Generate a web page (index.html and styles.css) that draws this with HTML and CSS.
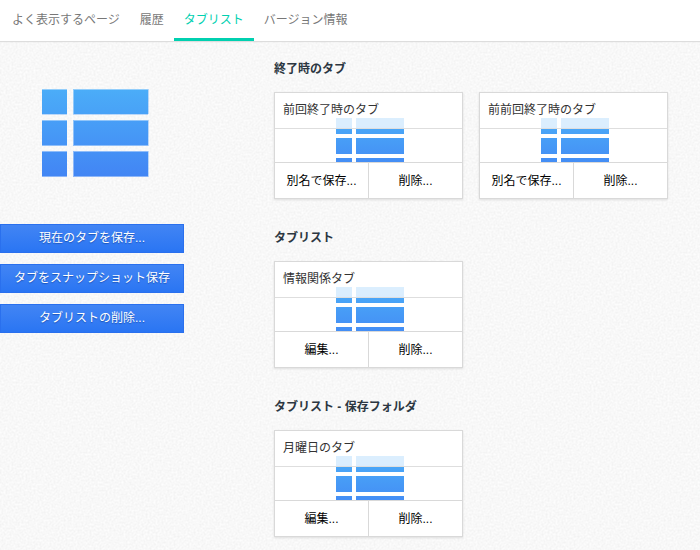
FILE: index.html
```html
<!DOCTYPE html>
<html lang="ja">
<head>
<meta charset="utf-8">
<meta name="viewport" content="width=device-width, initial-scale=1">
<title>タブリスト</title>
<link rel="stylesheet" href="styles.css">
</head>
<body>
<svg class="defs" width="0" height="0" aria-hidden="true">
  <defs>
    <linearGradient id="blue" gradientUnits="userSpaceOnUse" x1="0" y1="0" x2="0" y2="88">
      <stop offset="0" stop-color="#4badf8"/>
      <stop offset="1" stop-color="#4285f4"/>
    </linearGradient>
    <linearGradient id="blue-small" gradientUnits="userSpaceOnUse" x1="0" y1="0" x2="0" y2="56">
      <stop offset="0" stop-color="#4badf8"/>
      <stop offset="1" stop-color="#4285f4"/>
    </linearGradient>
    <symbol id="list" viewBox="0 0 71 44">
      <path fill="url(#blue-small)" d="M3 0h16v16H3zM23 0h48v16H23zM3 20h16v16H3zM23 20h48v16H23zM3 40h16v4H3zM23 40h48v4H23z"/>
    </symbol>
  </defs>
</svg>
<nav class="tabs">
  <a class="tab" href="#pages">よく表示するページ</a>
  <a class="tab" href="#history">履歴</a>
  <a class="tab tab-active" href="#tablist" aria-current="page">タブリスト</a>
  <a class="tab" href="#about">バージョン情報</a>
</nav>
<div class="layout">
  <aside class="side">
    <svg class="logo" width="107" height="88" viewBox="0 0 107 88" aria-hidden="true">
      <path fill="url(#blue)" d="M0 0h25v25H0zM31 0h75v25H31zM0 31h25v26H0zM31 31h75v26H31zM0 62h25v26H0zM31 62h75v26H31z"/>
      <path fill="#fff" fill-opacity=".4" d="M0 0h25v1H0zM31 0h75v1H31zM0 31h25v1H0zM31 31h75v1H31zM0 62h25v1H0zM31 62h75v1H31zM0 56h25v1H0zM31 56h75v1H31zM0 87h25v1H0zM31 87h75v1H31zM31 1h1v24h-1zM31 32h1v24h-1zM31 63h1v24h-1z"/>
      <path fill="#4a9bf6" fill-opacity=".35" d="M0 25h25v1H0zM31 25h75v1H31zM106 0h1v25h-1zM106 31h1v26h-1zM106 62h1v26h-1z"/>
    </svg>
    <button class="action" type="button">現在のタブを保存...</button>
    <button class="action" type="button">タブをスナップショット保存</button>
    <button class="action" type="button">タブリストの削除...</button>
  </aside>
  <main class="content">
    <section class="group">
      <h2 class="heading">終了時のタブ</h2>
      <div class="cards">
        <article class="card">
          <div class="preview">
            <svg class="thumb" width="71" height="44" aria-hidden="true"><use href="#list"/></svg>
            <h3 class="name">前回終了時のタブ</h3>
          </div>
          <div class="buttons">
            <button class="cell" type="button">別名で保存...</button>
            <button class="cell" type="button">削除...</button>
          </div>
        </article>
        <article class="card">
          <div class="preview">
            <svg class="thumb" width="71" height="44" aria-hidden="true"><use href="#list"/></svg>
            <h3 class="name">前前回終了時のタブ</h3>
          </div>
          <div class="buttons">
            <button class="cell" type="button">別名で保存...</button>
            <button class="cell" type="button">削除...</button>
          </div>
        </article>
      </div>
    </section>
    <section class="group">
      <h2 class="heading">タブリスト</h2>
      <div class="cards">
        <article class="card">
          <div class="preview">
            <svg class="thumb" width="71" height="44" aria-hidden="true"><use href="#list"/></svg>
            <h3 class="name">情報関係タブ</h3>
          </div>
          <div class="buttons">
            <button class="cell" type="button">編集...</button>
            <button class="cell" type="button">削除...</button>
          </div>
        </article>
      </div>
    </section>
    <section class="group">
      <h2 class="heading">タブリスト - 保存フォルダ</h2>
      <div class="cards">
        <article class="card">
          <div class="preview">
            <svg class="thumb" width="71" height="44" aria-hidden="true"><use href="#list"/></svg>
            <h3 class="name">月曜日のタブ</h3>
          </div>
          <div class="buttons">
            <button class="cell" type="button">編集...</button>
            <button class="cell" type="button">削除...</button>
          </div>
        </article>
      </div>
    </section>
  </main>
</div>
</body>
</html>
```
FILE: styles.css
```css
* {
  box-sizing: border-box;
}

body {
  margin: 0;
  background: #f7f7f7 url("data:image/svg+xml,%3Csvg xmlns='http://www.w3.org/2000/svg' width='200' height='200'%3E%3Cfilter id='n' x='0' y='0' width='100%25' height='100%25' color-interpolation-filters='sRGB'%3E%3CfeTurbulence type='fractalNoise' baseFrequency='.5' numOctaves='2' stitchTiles='stitch'/%3E%3CfeColorMatrix values='.07 0 0 0 .937 .07 0 0 0 .937 .07 0 0 0 .937 0 0 0 0 1'/%3E%3C/filter%3E%3Crect width='200' height='200' filter='url(%23n)'/%3E%3C/svg%3E");
  color: #2c3742;
  font-family: "Liberation Sans", "Noto Sans CJK JP", sans-serif;
  font-size: 12px;
}

button {
  margin: 0;
  padding: 0;
  border: 0;
  font: inherit;
  cursor: pointer;
}

.defs {
  position: absolute;
}

.tabs {
  display: flex;
  padding: 0 2px;
  background: #fff;
  box-shadow: 0 1px 1px #ddd;
}

.tab {
  padding: 2px 10px 0;
  border-bottom: 3px solid transparent;
  color: #777;
  line-height: 36px;
  text-decoration: none;
  white-space: nowrap;
}

.tab-active {
  border-bottom-color: #00d0b0;
  color: #00d0b0;
}

.layout {
  display: grid;
  grid-template-columns: 184px 1fr;
  column-gap: 90px;
  align-items: start;
  padding-bottom: 12px;
}

.side {
  display: flex;
  flex-direction: column;
  gap: 11px;
  padding-top: 48px;
}

.logo {
  margin: 0 0 36px 42px;
}

.action {
  height: 29px;
  border: 1px solid #2a70ee;
  background: linear-gradient(#4285f4, #2a75f3);
  color: #fff;
  line-height: 27px;
  text-shadow: 0 1px 1px #1d54b8;
}

.content {
  display: grid;
  gap: 28px;
  padding-top: 17px;
}

.heading {
  margin: 0 0 12px;
  font-size: 12px;
  line-height: 22px;
}

.cards {
  display: grid;
  grid-template-columns: repeat(auto-fill, 189px);
  gap: 16px;
}

.card {
  border: 1px solid #d9d9d9;
  background: #fff;
  box-shadow: 0 1px 2px #ddd;
}

.preview {
  position: relative;
  display: flex;
  justify-content: center;
  padding-top: 25px;
}

.name {
  position: absolute;
  top: 0;
  right: 0;
  left: 0;
  margin: 0;
  padding: 0 8px;
  border-bottom: 1px solid #dedede;
  background: rgba(255, 255, 255, .8);
  color: #333;
  font-size: 12px;
  font-weight: 400;
  line-height: 35px;
}

.buttons {
  display: grid;
  grid-template-columns: 1fr 1fr;
  gap: 1px;
  padding-top: 1px;
  background: #d9d9d9;
}

.cell {
  height: 35px;
  padding-top: 2px;
  background: #fff;
  color: #000;
  line-height: 33px;
}
```
